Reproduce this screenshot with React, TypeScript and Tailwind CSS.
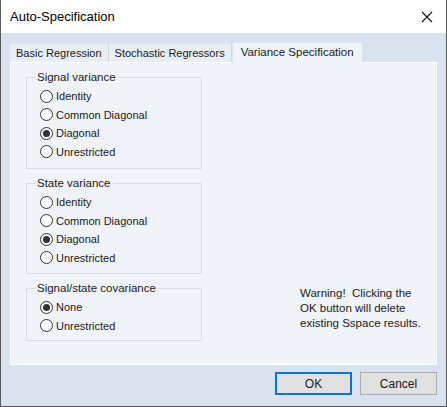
import React, { useState } from 'react'

const Radio = ({ label, checked, onClick }: { label: string; checked: boolean; onClick: () => void }) => (
  <div className="flex items-center h-[18.5px] cursor-default" onClick={onClick}>
    <span className="w-[13px] h-[13px] rounded-full border border-[#333] bg-white flex items-center justify-center mr-[3px]">
      {checked && <span className="w-[7px] h-[7px] rounded-full bg-[#333]" />}
    </span>
    <span className="text-[11px] text-[#1a1a1a]">{label}</span>
  </div>
)

const Group = ({
  title,
  options,
  initial,
  className,
}: {
  title: string
  options: string[]
  initial: number
  className: string
}) => {
  const [sel, setSel] = useState(initial)
  return (
    <fieldset className={`border border-[#d5dbe3] rounded-[1px] pl-[13px] pr-2 pb-[6px] ${className}`}>
      <legend className="px-[2px] -ml-[5px] text-[11.5px] text-[#1a1a1a] leading-[14px]">{title}</legend>
      <div className="flex flex-col mt-[3px]">
        {options.map((o, i) => (
          <Radio key={o} label={o} checked={sel === i} onClick={() => setSel(i)} />
        ))}
      </div>
    </fieldset>
  )
}

const tabs = ['Basic Regression', 'Stochastic Regressors', 'Variance Specification']

export default function App() {
  const [tab, setTab] = useState(2)

  return (
    <div
      className="w-[447px] h-[407px] flex flex-col bg-[#d9e3ef] border-x border-b border-[#5a5a5a] overflow-hidden select-none"
      style={{ fontFamily: '"Liberation Sans", Arial, sans-serif' }}
    >
      <div className="h-[33px] bg-white flex items-center justify-between pl-[9px] pr-[10px] shrink-0">
        <span className="text-[13px] text-black">Auto-Specification</span>
        <svg width="12" height="12" viewBox="0 0 12 12" className="mr-[3px]">
          <path d="M1 1 L11 11 M11 1 L1 11" stroke="#111" strokeWidth="1.1" fill="none" />
        </svg>
      </div>

      <div className="pl-[9px] pr-[9px] pt-[8px]">
        <div className="flex items-end h-[21px]">
          {tabs.map((t, i) => (
            <div
              key={t}
              onClick={() => setTab(i)}
              className={
                i === tab
                  ? 'h-[21px] px-[8px] bg-[#f0f4f9] border-x border-t border-[#d9e3ef] flex items-center text-[11.5px] text-[#1a1a1a] -mb-px relative z-10'
                  : 'h-[18px] px-[6px] bg-[#e7eef6] border-r border-[#cdd6e1] flex items-center text-[11px] text-[#1a1a1a]'
              }
            >
              {t}
            </div>
          ))}
        </div>

        <div className="h-[303px] bg-[#f0f4f9] border border-white flex pt-[7px] pl-[15px] pr-[14px]">
          <div className="w-[176px] flex flex-col gap-[7px]">
            <Group
              title="Signal variance"
              options={['Identity', 'Common Diagonal', 'Diagonal', 'Unrestricted']}
              initial={2}
              className="h-[99px]"
            />
            <Group
              title="State variance"
              options={['Identity', 'Common Diagonal', 'Diagonal', 'Unrestricted']}
              initial={2}
              className="h-[98px]"
            />
            <Group title="Signal/state covariance" options={['None', 'Unrestricted']} initial={0} className="h-[60px]" />
          </div>
          <div className="flex-1 flex items-end justify-end pb-[33px]">
            <p className="w-[126px] text-[11.5px] leading-[15px] text-[#1a1a1a] -mr-[4px]">
              Warning!&nbsp; Clicking the OK button will delete existing Sspace results.
            </p>
          </div>
        </div>
      </div>

      <div className="flex justify-end gap-[8px] pr-[9px] pt-[7px]">
        <button className="w-[77px] h-[23px] bg-[#e1e1e1] border-2 border-[#0078d7] text-[12px] text-[#1a1a1a]">OK</button>
        <button className="w-[77px] h-[23px] bg-[#e1e1e1] border border-[#adadad] text-[12px] text-[#1a1a1a]">Cancel</button>
      </div>
    </div>
  )
}
